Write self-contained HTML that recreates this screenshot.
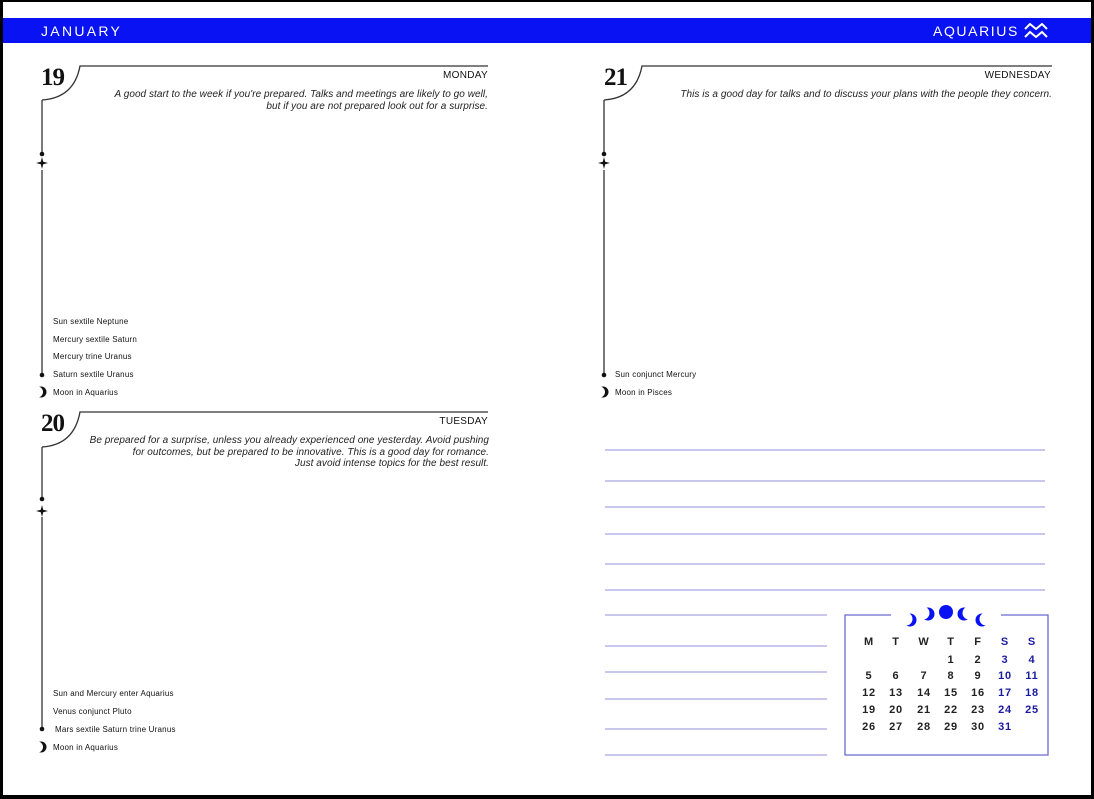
<!DOCTYPE html>
<html><head><meta charset="utf-8"><style>
*{margin:0;padding:0;box-sizing:border-box}
body{width:1094px;height:799px;position:relative;background:#fff;font-family:"Liberation Sans",sans-serif;overflow:hidden}
.b{position:absolute;background:#000}
.t{position:absolute;white-space:nowrap;color:#111}
.day{font-size:10px;letter-spacing:.3px}
.it{font-style:italic;font-size:10px;text-align:right;line-height:11.5px;color:#222;letter-spacing:.05px}
.ev{font-size:8px;color:#111;letter-spacing:.2px}
.num{font-family:"Liberation Serif",serif;font-weight:bold;font-size:25px;letter-spacing:-1px}
.cal{position:absolute;font-size:11px;text-align:center;width:26px;letter-spacing:.8px;font-weight:bold;color:#222}
</style></head><body>
<div class="b" style="left:0;top:0;width:1094px;height:2px"></div>
<div class="b" style="left:0;top:0;width:3px;height:799px"></div>
<div class="b" style="right:0;top:0;width:3px;height:799px"></div>
<div class="b" style="left:0;bottom:0;width:1094px;height:4px"></div>
<div style="position:absolute;left:3px;top:18px;width:1088px;height:25px;background:#0812f2"></div>
<div class="t" style="left:41px;top:23px;color:#fff;font-size:14px;letter-spacing:2.3px">JANUARY</div>
<div class="t" style="left:933px;top:23px;color:#fff;font-size:14px;letter-spacing:1.6px">AQUARIUS</div>
<svg style="position:absolute;left:1024px;top:23px" width="24" height="16"><path d="M1 6 L6 1 L12 6 L18 1 L23 6 M1 14 L6 9 L12 14 L18 9 L23 14" stroke="#fff" stroke-width="2" fill="none"/></svg>

<svg style="position:absolute;left:0;top:0" width="1094" height="799">
<g stroke="#333" stroke-width="1.3" fill="none">
<path d="M42 100 Q74 98 80 66 L488 66"/>
<path d="M42 100 L42 155 M42 170 L42 375"/>
<path d="M42 447 Q74 445 80 412 L488 412"/>
<path d="M42 447 L42 500 M42 517 L42 730"/>
<path d="M604 100 Q636 98 642 66 L1052 66"/>
<path d="M604 100 L604 155 M604 170 L604 375"/>
</g>
<g fill="#111">
<circle cx="42" cy="154" r="2.3"/><circle cx="42" cy="375" r="2.3"/>
<circle cx="42" cy="499" r="2.3"/><circle cx="42" cy="729" r="2.3"/>
<circle cx="604" cy="154" r="2.3"/><circle cx="604" cy="375" r="2.3"/>
<path d="M42 157 L43.2 161.8 L48 163 L43.2 164.2 L42 169 L40.8 164.2 L36 163 L40.8 161.8Z"/>
<path d="M42 505 L43.2 509.8 L48 511 L43.2 512.2 L42 517 L40.8 512.2 L36 511 L40.8 509.8Z"/>
<path d="M604 157 L605.2 161.8 L610 163 L605.2 164.2 L604 169 L602.8 164.2 L598 163 L602.8 161.8Z"/>
</g>
<g fill="#111"><circle cx="41" cy="392" r="5.5"/><circle cx="41" cy="747" r="5.5"/><circle cx="603" cy="392" r="5.5"/></g>
<g fill="#fff"><circle cx="37.5" cy="392" r="5.5"/><circle cx="37.5" cy="747" r="5.5"/><circle cx="599.5" cy="392" r="5.5"/></g>
<g stroke="#a8a8e0" stroke-width="1.2">
<path d="M605 450H1045M605 481H1045M605 507H1045M605 534H1045M605 564H1045M605 590H1045"/>
<path d="M605 615H827M605 646H827M605 672H827M605 699H827M605 729H827M605 755H827"/>
</g>
<path d="M891 615H845V755H1048V615H1001" stroke="#6a6ad0" stroke-width="1.3" fill="none"/>
<g fill="#0812f2">
<circle cx="946" cy="612" r="7"/>
<circle cx="910" cy="620" r="6.5"/>
<circle cx="928" cy="614" r="6.5"/>
<circle cx="964" cy="614" r="6.5"/>
<circle cx="982" cy="620" r="6.5"/>
</g>
<g fill="#fff">
<circle cx="906" cy="619" r="6.5"/>
<circle cx="923" cy="613" r="6.5"/>
<circle cx="969" cy="613" r="6.5"/>
<circle cx="986" cy="619" r="6.5"/>
</g>
</svg>

<div class="t num" style="left:41px;top:64px">19</div>
<div class="t day" style="left:400px;top:70px;width:88px;text-align:right">MONDAY</div>
<div class="t it" style="left:88px;top:89px;width:400px">A good start to the week if you're prepared. Talks and meetings are likely to go well,<br>but if you are not prepared look out for a surprise.</div>
<div class="t ev" style="left:53px;top:317px">Sun sextile Neptune</div>
<div class="t ev" style="left:53px;top:335px">Mercury sextile Saturn</div>
<div class="t ev" style="left:53px;top:352px">Mercury trine Uranus</div>
<div class="t ev" style="left:53px;top:370px">Saturn sextile Uranus</div>
<div class="t ev" style="left:53px;top:388px">Moon in Aquarius</div>

<div class="t num" style="left:41px;top:410px">20</div>
<div class="t day" style="left:400px;top:416px;width:88px;text-align:right">TUESDAY</div>
<div class="t it" style="left:40px;top:435px;width:449px">Be prepared for a surprise, unless you already experienced one yesterday. Avoid pushing<br>for outcomes, but be prepared to be innovative. This is a good day for romance.<br>Just avoid intense topics for the best result.</div>
<div class="t ev" style="left:53px;top:689px">Sun and Mercury enter Aquarius</div>
<div class="t ev" style="left:53px;top:707px">Venus conjunct Pluto</div>
<div class="t ev" style="left:55px;top:725px">Mars sextile Saturn trine Uranus</div>
<div class="t ev" style="left:53px;top:743px">Moon in Aquarius</div>

<div class="t num" style="left:604px;top:64px">21</div>
<div class="t day" style="left:900px;top:70px;width:151px;text-align:right">WEDNESDAY</div>
<div class="t it" style="left:600px;top:89px;width:452px">This is a good day for talks and to discuss your plans with the people they concern.</div>
<div class="t ev" style="left:615px;top:370px">Sun conjunct Mercury</div>
<div class="t ev" style="left:615px;top:388px">Moon in Pisces</div>

<div style="position:absolute;left:856px;top:636px;width:190px;height:120px;font-size:11px;color:#111">
<div class="cal" style="left:0;top:0">M</div><div class="cal" style="left:27px;top:0">T</div><div class="cal" style="left:55px;top:0">W</div><div class="cal" style="left:82px;top:0">T</div><div class="cal" style="left:109px;top:0">F</div><div class="cal" style="left:136px;top:0;color:#1a1aa0">S</div><div class="cal" style="left:163px;top:0;color:#1a1aa0">S</div>
<div class="cal" style="left:82px;top:18px">1</div><div class="cal" style="left:109px;top:18px">2</div><div class="cal" style="left:136px;top:18px;color:#1a1aa0">3</div><div class="cal" style="left:163px;top:18px;color:#1a1aa0">4</div>
<div class="cal" style="left:0;top:34px">5</div><div class="cal" style="left:27px;top:34px">6</div><div class="cal" style="left:55px;top:34px">7</div><div class="cal" style="left:82px;top:34px">8</div><div class="cal" style="left:109px;top:34px">9</div><div class="cal" style="left:136px;top:34px;color:#1a1aa0">10</div><div class="cal" style="left:163px;top:34px;color:#1a1aa0">11</div>
<div class="cal" style="left:0;top:51px">12</div><div class="cal" style="left:27px;top:51px">13</div><div class="cal" style="left:55px;top:51px">14</div><div class="cal" style="left:82px;top:51px">15</div><div class="cal" style="left:109px;top:51px">16</div><div class="cal" style="left:136px;top:51px;color:#1a1aa0">17</div><div class="cal" style="left:163px;top:51px;color:#1a1aa0">18</div>
<div class="cal" style="left:0;top:68px">19</div><div class="cal" style="left:27px;top:68px">20</div><div class="cal" style="left:55px;top:68px">21</div><div class="cal" style="left:82px;top:68px">22</div><div class="cal" style="left:109px;top:68px">23</div><div class="cal" style="left:136px;top:68px;color:#1a1aa0">24</div><div class="cal" style="left:163px;top:68px;color:#1a1aa0">25</div>
<div class="cal" style="left:0;top:85px">26</div><div class="cal" style="left:27px;top:85px">27</div><div class="cal" style="left:55px;top:85px">28</div><div class="cal" style="left:82px;top:85px">29</div><div class="cal" style="left:109px;top:85px">30</div><div class="cal" style="left:136px;top:85px;color:#1a1aa0">31</div>
</div>
</body></html>
